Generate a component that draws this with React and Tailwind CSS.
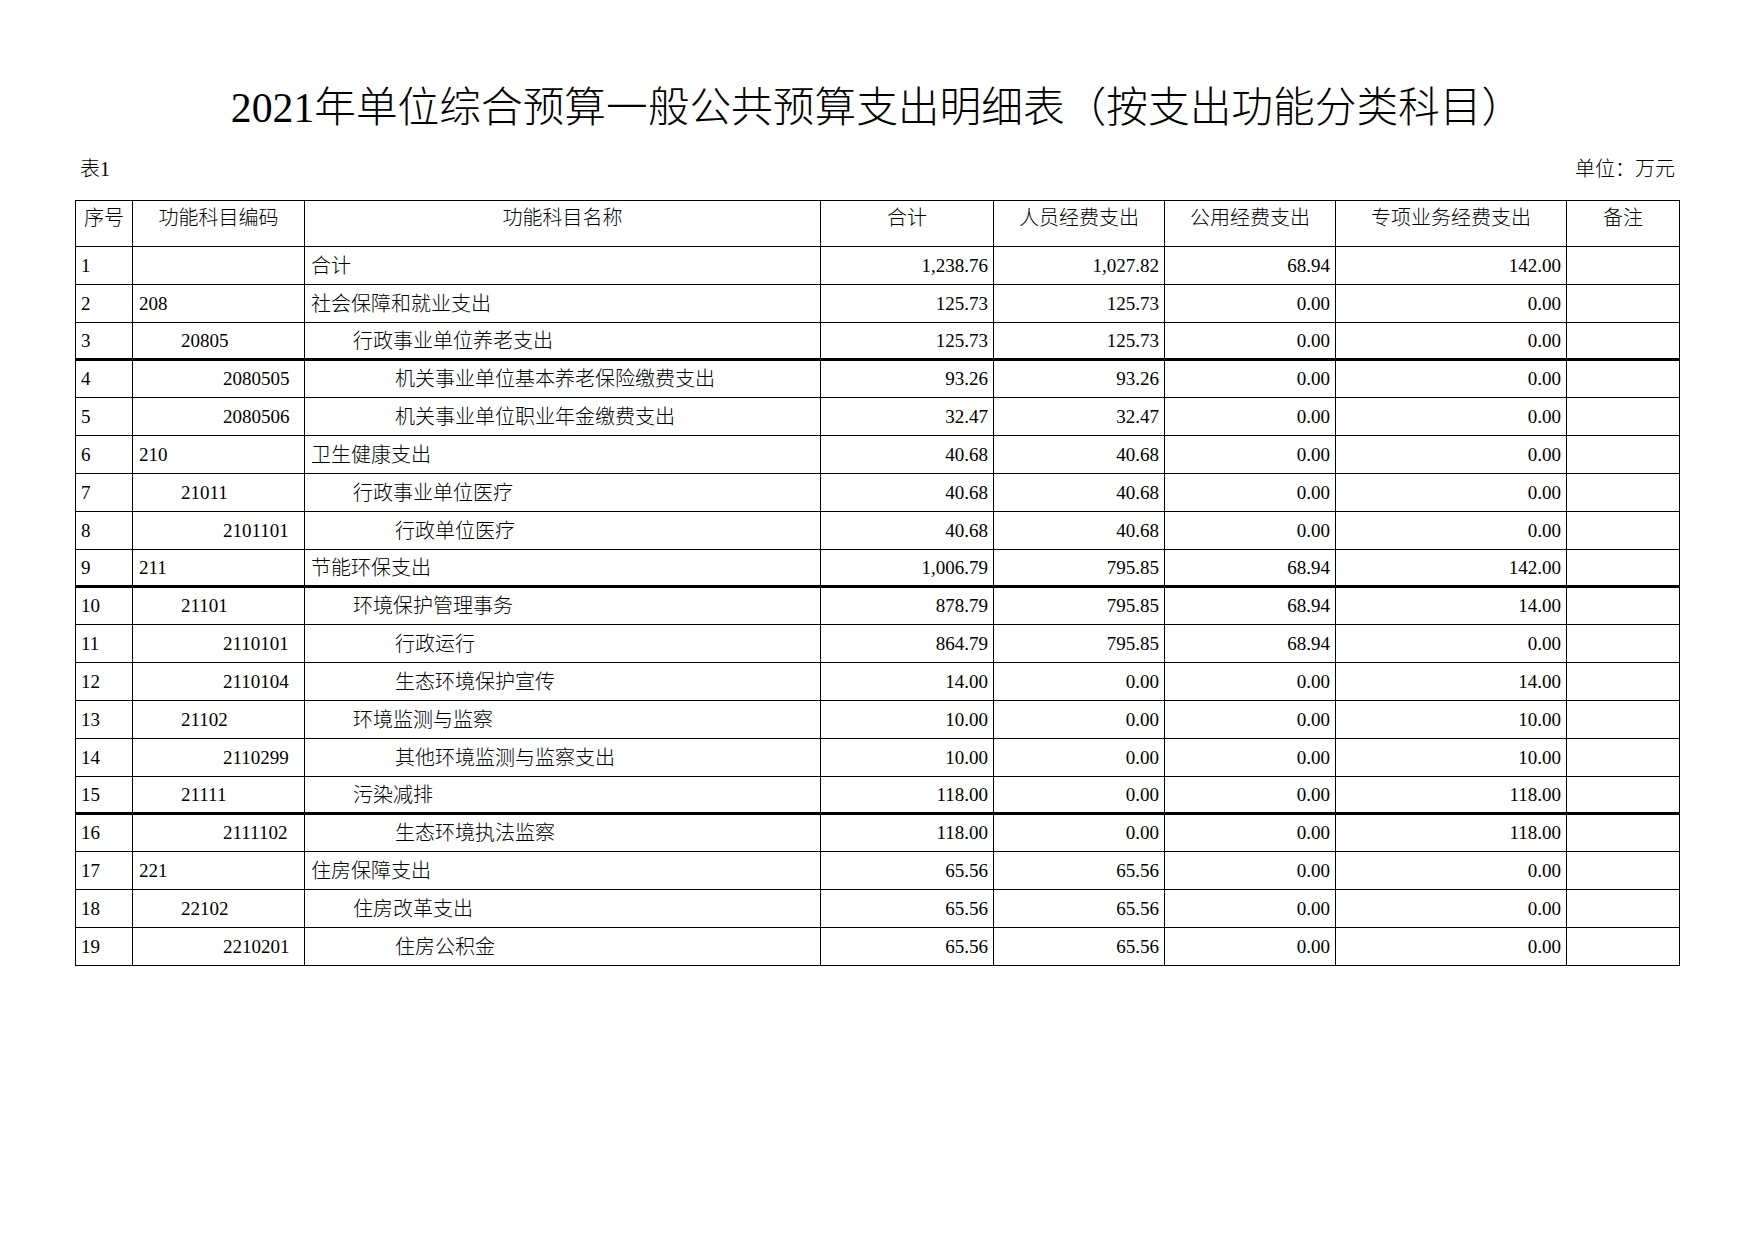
import React from "react";

const rows = [
  ["1", "", 0, "合计", 0, "1,238.76", "1,027.82", "68.94", "142.00"],
  ["2", "208", 0, "社会保障和就业支出", 0, "125.73", "125.73", "0.00", "0.00"],
  ["3", "20805", 1, "行政事业单位养老支出", 1, "125.73", "125.73", "0.00", "0.00", true],
  ["4", "2080505", 2, "机关事业单位基本养老保险缴费支出", 2, "93.26", "93.26", "0.00", "0.00"],
  ["5", "2080506", 2, "机关事业单位职业年金缴费支出", 2, "32.47", "32.47", "0.00", "0.00"],
  ["6", "210", 0, "卫生健康支出", 0, "40.68", "40.68", "0.00", "0.00"],
  ["7", "21011", 1, "行政事业单位医疗", 1, "40.68", "40.68", "0.00", "0.00"],
  ["8", "2101101", 2, "行政单位医疗", 2, "40.68", "40.68", "0.00", "0.00"],
  ["9", "211", 0, "节能环保支出", 0, "1,006.79", "795.85", "68.94", "142.00", true],
  ["10", "21101", 1, "环境保护管理事务", 1, "878.79", "795.85", "68.94", "14.00"],
  ["11", "2110101", 2, "行政运行", 2, "864.79", "795.85", "68.94", "0.00"],
  ["12", "2110104", 2, "生态环境保护宣传", 2, "14.00", "0.00", "0.00", "14.00"],
  ["13", "21102", 1, "环境监测与监察", 1, "10.00", "0.00", "0.00", "10.00"],
  ["14", "2110299", 2, "其他环境监测与监察支出", 2, "10.00", "0.00", "0.00", "10.00"],
  ["15", "21111", 1, "污染减排", 1, "118.00", "0.00", "0.00", "118.00", true],
  ["16", "2111102", 2, "生态环境执法监察", 2, "118.00", "0.00", "0.00", "118.00"],
  ["17", "221", 0, "住房保障支出", 0, "65.56", "65.56", "0.00", "0.00"],
  ["18", "22102", 1, "住房改革支出", 1, "65.56", "65.56", "0.00", "0.00"],
  ["19", "2210201", 2, "住房公积金", 2, "65.56", "65.56", "0.00", "0.00"],
];

const indent = ["pl-[6px]", "pl-[48px]", "pl-[90px]"];

const headers = [
  "序号",
  "功能科目编码",
  "功能科目名称",
  "合计",
  "人员经费支出",
  "公用经费支出",
  "专项业务经费支出",
  "备注",
];

const App = () => {
  return (
    <div className="w-[1755px] h-[1240px] bg-white text-black font-light font-['Liberation_Serif','Noto_Sans_CJK_SC',serif]">
      <div className="pt-[83px] pl-[75px]">
        <div className="w-[1604px]">
          <h1 className="h-[50px] leading-[50px] text-[41.7px] font-light text-center">
            2021年单位综合预算一般公共预算支出明细表（按支出功能分类科目）
          </h1>
          <div className="mt-[22px] h-[28px] leading-[28px] text-[20px] flex justify-between">
            <span className="pl-[5px]">表1</span>
            <span className="pr-[4px]">单位：万元</span>
          </div>
          <table className="mt-[17px] w-[1604px] table-fixed border-collapse text-[19px]">
            <colgroup>
              <col className="w-[57px]" />
              <col className="w-[172px]" />
              <col className="w-[516px]" />
              <col className="w-[173px]" />
              <col className="w-[171px]" />
              <col className="w-[171px]" />
              <col className="w-[231px]" />
              <col className="w-[113px]" />
            </colgroup>
            <thead>
              <tr className="h-[46px]">
                {headers.map((h) => (
                  <th
                    key={h}
                    className="border border-black align-top pt-[4px] font-light text-[20px] text-center leading-[26px] whitespace-nowrap"
                  >
                    {h}
                  </th>
                ))}
              </tr>
            </thead>
            <tbody>
              {rows.map((r) => (
                <tr
                  key={r[0]}
                  className={r[9] ? "h-[37px] border-b-[3px] border-black" : "h-[38px]"}
                >
                  <td className="border border-black pl-[5px] leading-[24px]">{r[0]}</td>
                  <td className={`border border-black leading-[24px] ${indent[r[2]]}`}>{r[1]}</td>
                  <td className={`border border-black text-[20px] leading-[24px] whitespace-nowrap ${indent[r[4]]}`}>
                    {r[3]}
                  </td>
                  <td className="border border-black text-right pr-[5px] leading-[24px]">{r[5]}</td>
                  <td className="border border-black text-right pr-[5px] leading-[24px]">{r[6]}</td>
                  <td className="border border-black text-right pr-[5px] leading-[24px]">{r[7]}</td>
                  <td className="border border-black text-right pr-[5px] leading-[24px]">{r[8]}</td>
                  <td className="border border-black"></td>
                </tr>
              ))}
            </tbody>
          </table>
        </div>
      </div>
    </div>
  );
};

export default App;
